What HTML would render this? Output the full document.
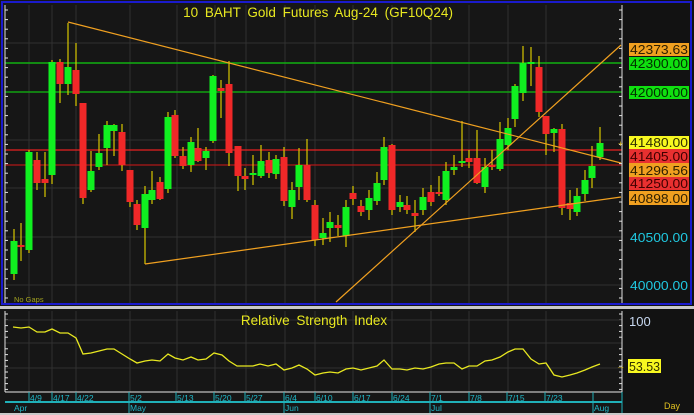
<!DOCTYPE html>
<html><head><meta charset="utf-8"><style>
html,body{margin:0;padding:0;background:#161616;}
body{width:694px;height:415px;overflow:hidden;}
svg{display:block;font-family:"Liberation Sans",sans-serif;}
</style></head><body>
<svg id="s" width="694" height="415" viewBox="0 0 694 415" xmlns="http://www.w3.org/2000/svg">
<rect x="0" y="0" width="694" height="415" fill="#161616"/>
<rect x="622" y="0" width="72" height="415" fill="#121212"/>
<rect x="2" y="2" width="689" height="302" fill="none" stroke="#1a1acc" stroke-width="2"/>
<rect x="0" y="306" width="694" height="3" fill="#c8c8c8"/>
<g id="grid" stroke="#303030" stroke-width="1"></g>
<g id="hl">
<line x1="5" y1="63" x2="622" y2="63" stroke="#10b010" stroke-width="1.5"/>
<line x1="5" y1="92" x2="622" y2="92" stroke="#10a010" stroke-width="1.5"/>
<line x1="5" y1="150" x2="622" y2="150" stroke="#e82020" stroke-width="1.2"/>
<line x1="5" y1="165" x2="622" y2="165" stroke="#b01818" stroke-width="1.2"/>
</g>
<g id="candles"></g>
<g fill="none" stroke="#f0a020" stroke-width="1.2">
<line x1="68" y1="22" x2="621" y2="163"/>
<line x1="145" y1="264" x2="621" y2="197"/>
<line x1="336" y1="302" x2="621" y2="45"/>
</g>
<text x="318" y="17" fill="#e8e820" font-size="13.5" text-anchor="middle" word-spacing="3">10 BAHT Gold Futures Aug-24 (GF10Q24)</text>
<text x="14" y="302" fill="#a0a020" font-size="7.5">No Gaps</text>
<g id="ticks" stroke="#e0e0e0" stroke-width="1"></g>
<line x1="622" y1="5" x2="622" y2="303" stroke="#e0e0e0"/>
<line x1="5" y1="5" x2="5" y2="303" stroke="#e0e0e0"/>
<g font-size="12.5">
<text x="630" y="54" fill="#20c8e0" textLength="58" lengthAdjust="spacingAndGlyphs">42500.00</text>
<rect x="629" y="43" width="60" height="13" fill="#f0a020"/><text x="630" y="54" fill="#302000" textLength="58" lengthAdjust="spacingAndGlyphs">42373.63</text>
<rect x="629" y="57" width="60" height="13" fill="#10e010"/><text x="630" y="68" fill="#003000" textLength="58" lengthAdjust="spacingAndGlyphs">42300.00</text>
<rect x="629" y="86" width="60" height="13" fill="#10e010"/><text x="630" y="97" fill="#003000" textLength="58" lengthAdjust="spacingAndGlyphs">42000.00</text>
<rect x="629" y="136" width="60" height="13" fill="#f8f820"/><text x="630" y="147" fill="#303000" textLength="58" lengthAdjust="spacingAndGlyphs">41480.00</text>
<rect x="629" y="149" width="60" height="14" fill="#e83030"/><text x="630" y="161" fill="#400000" textLength="58" lengthAdjust="spacingAndGlyphs">41405.00</text>
<rect x="629" y="163" width="60" height="14" fill="#f0a020"/><text x="630" y="175" fill="#302000" textLength="58" lengthAdjust="spacingAndGlyphs">41296.56</text>
<rect x="629" y="177" width="60" height="13" fill="#e83030"/><text x="630" y="188" fill="#400000" textLength="58" lengthAdjust="spacingAndGlyphs">41250.00</text>
<rect x="629" y="191" width="60" height="14" fill="#f0a020"/><text x="630" y="203" fill="#302000" textLength="58" lengthAdjust="spacingAndGlyphs">40898.00</text>
<text x="630" y="242" fill="#20c8e0" textLength="58" lengthAdjust="spacingAndGlyphs">40500.00</text>
<text x="630" y="290" fill="#20c8e0" textLength="58" lengthAdjust="spacingAndGlyphs">40000.00</text>
<text x="618" y="147" fill="#e0c020" font-size="9">+</text>
</g>
<g id="rgrid" stroke="#303030"></g>
<line x1="5" y1="311" x2="5" y2="392" stroke="#e0e0e0"/>
<line x1="622" y1="311" x2="622" y2="392" stroke="#e0e0e0"/>
<line x1="5" y1="392" x2="622" y2="392" stroke="#e8e8e8"/>
<text x="314" y="325" fill="#e8e820" font-size="13.5" text-anchor="middle" word-spacing="3">Relative Strength Index</text>
<polyline id="rsi" fill="none" stroke="#e8e820" stroke-width="1.3"/>
<text x="629" y="326" fill="#c8d8f0" font-size="13">100</text>
<text x="629" y="372" fill="#c8d8f0" font-size="13">50</text>
<rect x="628" y="359" width="33" height="14" fill="#f8f820"/><text x="629" y="371" fill="#303000" font-size="12.5" textLength="31" lengthAdjust="spacingAndGlyphs">53.53</text>
<text x="616" y="369" fill="#e0c020" font-size="9">→</text>
<text x="664" y="409" fill="#e0c020" font-size="9">Day</text>
<line x1="5" y1="402" x2="622" y2="402" stroke="#20b0b8" stroke-width="2"/>
<g id="dates" font-size="8.5" fill="#20b8c8"></g>
<line x1="622" y1="392" x2="622" y2="415" stroke="#20b0b8"/>
<rect x="0" y="413" width="694" height="2" fill="#c8c8c8"/>
</svg>
<script>
var NS="http://www.w3.org/2000/svg";
function el(p,t,a){var e=document.createElementNS(NS,t);for(var k in a)e.setAttribute(k,a[k]);p.appendChild(e);return e;}
var g=document.getElementById('grid'),rg=document.getElementById('rgrid');
var vx=[29,52,76,130,177,215,246,285,315,353,392,431,469,508,546];
vx.forEach(function(x){el(g,'line',{x1:x,y1:5,x2:x,y2:303});el(rg,'line',{x1:x,y1:311,x2:x,y2:392});});
[43,140,188,237,285].forEach(function(y){el(g,'line',{x1:5,y1:y,x2:622,y2:y});});
[320,343,368].forEach(function(y){el(rg,'line',{x1:5,y1:y,x2:622,y2:y});});
var tk=document.getElementById('ticks');
for(var y=10;y<303;y+=9.6){el(tk,'line',{x1:5,y1:y,x2:8,y2:y});el(tk,'line',{x1:619,y1:y,x2:622,y2:y});}
for(var y=314;y<392;y+=5.8){el(tk,'line',{x1:5,y1:y,x2:8,y2:y});el(tk,'line',{x1:619,y1:y,x2:622,y2:y});}
var C=[[14,241,274,'g',229,280],[21,245,247,'r',223,261],[29,152,250,'g',150,253],[37,160,183,'r',152,190],[45,179,183,'r',152,197],
[52,62,175,'g',60,184],[60,62,84,'r',59,103],[68,67,84,'g',23,95],[76,70,94,'r',43,106],[83,103,198,'r',103,204],
[91,171,190,'g',151,192],[99,153,167,'g',134,170],[107,125,148,'g',121,165],[114,125,131,'g',124,156],[122,132,165,'r',124,171],
[130,170,202,'r',170,207],[137,204,225,'r',200,230],[145,194,228,'g',186,264],[152,190,200,'g',171,204],[160,182,199,'r',177,200],
[168,117,189,'g',112,193],[175,115,156,'r',110,158],[183,156,166,'r',147,169],[191,142,165,'g',137,172],[198,148,161,'r',128,162],
[206,151,158,'g',147,170],[213,76,141,'g',75,143],[221,88,91,'r',80,118],[229,84,153,'r',61,166],[238,146,176,'r',146,191],
[245,176,179,'r',168,190],[253,173,174,'g',155,185],[261,161,176,'g',145,178],[269,160,173,'r',152,178],[276,159,174,'g',155,179],
[284,157,201,'r',147,206],[292,190,207,'g',182,219],[299,165,187,'g',148,200],[307,165,200,'r',139,202],[315,205,240,'r',200,246],
[323,233,238,'g',218,245],[330,222,228,'g',212,242],[338,225,228,'r',215,236],[346,207,236,'g',200,247],[353,193,199,'r',186,205],
[361,206,212,'r',200,216],[369,198,210,'g',190,220],[377,183,201,'g',172,205],[384,147,180,'g',137,185],[392,145,210,'r',144,215],
[400,202,207,'g',195,212],[407,205,210,'r',196,214],[415,213,216,'r',200,232],[423,197,210,'g',188,215],[431,192,202,'r',185,206],
[439,192,193,'r',176,196],[446,171,200,'g',162,205],[454,167,170,'g',155,175],[462,161,163,'g',121,167],[469,158,162,'r',150,168],
[477,158,183,'r',130,184],[485,167,187,'g',158,193],[492,165,167,'r',150,170],[500,139,169,'g',122,171],[508,128,145,'g',118,150],
[515,86,119,'g',84,127],[523,63,93,'g',46,101],[531,62,63,'g',47,86],[539,67,112,'r',56,117],[546,116,134,'r',116,155],
[554,129,133,'g',128,152],[562,129,208,'r',124,215],[570,203,209,'r',190,220],[577,196,212,'g',188,216],[585,180,194,'g',170,201],
[592,166,178,'g',146,188],[600,143,157,'g',127,160]];
var cg=document.getElementById('candles');
C.forEach(function(c){
 el(cg,'line',{x1:c[0],y1:c[4],x2:c[0],y2:c[5],stroke:'#d8c800','stroke-width':1.2});
 var h=Math.max(c[2]-c[1],2);
 el(cg,'rect',{x:c[0]-3.5,y:c[1],width:7,height:h,fill:c[3]=='g'?'#10f020':'#f02828'});
});
var R=[[13,327],[21,328],[29,327],[37,332],[45,332],[52,329],[60,333],[68,333],[76,338],[83,354],[91,353],[99,351],[107,349],[114,349],[122,354],[130,359],[137,363],[145,361],[152,360],[160,361],[168,354],[175,358],[183,360],[191,357],[198,360],[206,359],[214,353],[222,355],[229,361],[237,366],[245,366],[253,366],[260,364],[268,366],[276,364],[284,370],[292,368],[299,365],[307,369],[315,375],[323,373],[330,372],[338,373],[346,369],[353,368],[361,370],[369,368],[377,366],[384,360],[392,369],[400,369],[407,370],[415,368],[423,369],[431,367],[439,364],[446,363],[454,363],[462,369],[469,366],[477,366],[485,361],[492,360],[500,357],[508,352],[515,349],[523,349],[531,359],[539,364],[546,363],[554,375],[562,377],[570,375],[577,373],[585,370],[592,367],[600,364]];
document.getElementById('rsi').setAttribute('points',R.map(function(p){return p.join(',');}).join(' '));
var dg=document.getElementById('dates');
var D=[[30,'4/9'],[53,'4/17'],[77,'4/22'],[130,'5/2'],[177,'5/13'],[215,'5/20'],[246,'5/27'],[285,'6/4'],[316,'6/10'],[354,'6/17'],[393,'6/24'],[431,'7/1'],[470,'7/8'],[508,'7/15'],[546,'7/23']];
D.forEach(function(d){el(dg,'line',{x1:d[0]-1,y1:392,x2:d[0]-1,y2:402,stroke:'#20b0b8'});var t=el(dg,'text',{x:d[0],y:401});t.textContent=d[1];});
var M=[[14,'Apr'],[130,'May'],[285,'Jun'],[431,'Jul'],[594,'Aug']];
M.forEach(function(d){if(d[0]>14)el(dg,'line',{x1:d[0]-1,y1:392,x2:d[0]-1,y2:413,stroke:'#20b0b8'});var t=el(dg,'text',{x:d[0],y:411});t.textContent=d[1];});
</script>
</body></html>
